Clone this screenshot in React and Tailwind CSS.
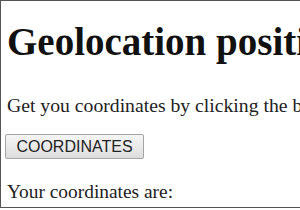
import React from 'react'

export default function App() {
  return (
    <div className="w-[300px] h-[210px] overflow-hidden bg-white">
      <div className="w-[300px] h-[208px] border border-r-0 border-[#555] overflow-hidden whitespace-nowrap text-[#111] font-['Liberation_Serif',serif] pl-[6px] pt-[19px]">
        <h1 className="text-[39px] font-bold leading-[44px]">Geolocation position</h1>
        <p className="mt-[30px] text-[19.7px] leading-[22px] text-[#222]">Get you coordinates by clicking the button below.</p>
        <button
          type="button"
          className="block mt-[18px] -ml-[2px] w-[139px] h-[25px] font-['Liberation_Sans',sans-serif] text-[16px] leading-none text-[#222] bg-gradient-to-b from-[#f6f6f6] to-[#dddddd] border border-[#a5a5a5] rounded-[2px]"
        >
          COORDINATES
        </button>
        <p className="mt-[22px] text-[19.4px] leading-[22px] text-[#222]">Your coordinates are:</p>
      </div>
    </div>
  )
}
